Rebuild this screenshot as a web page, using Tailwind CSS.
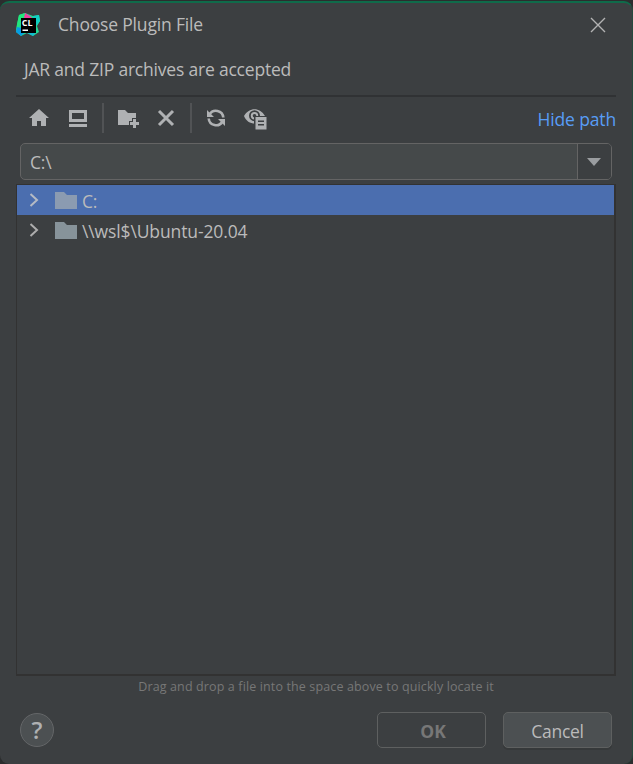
<!DOCTYPE html>
<html lang="en">
<head>
<meta charset="utf-8">
<title>Choose Plugin File</title>
<script src="https://cdn.jsdelivr.net/npm/@tailwindcss/browser@4"></script>
</head>
<body class="h-[764px] w-[633px] overflow-hidden bg-[#2b2d2e] pt-px font-['Open_Sans','Noto_Sans',sans-serif] text-[17.5px] text-[#bbbbbb]">
<div class="flex h-[763px] w-[633px] flex-col overflow-hidden rounded-[9px] border-t-2 border-r border-t-[#0f6b4a] border-r-[#25493d] bg-[#3c3f41]">
  <header class="flex h-[43px] shrink-0 items-center pl-4">
    <svg class="size-6 shrink-0" viewBox="0 0 24 24">
      <path d="M3 2 9 0 17 3 23 2 24 8 21 13 23 19 17 23 11 20 5 23 0 19 1 12Z" fill="#20d994"/>
      <path d="M3 2 9 0 8 6 3 13 0 18 1 11Z" fill="#21e77b"/>
      <path d="M9 0 14 3 16 5 8 5Z" fill="#ef3c9e"/>
      <path d="M17 3 23 2 24 8 20 13 17 9Z" fill="#10cfc3"/>
      <path d="M1 14 5 15 8 20 5 23 0 19Z" fill="#079ce3"/>
      <path d="M8 19 20 19 17 23 11 20Z" fill="#12bdd0"/>
      <path d="M5 5H20V20H5Z" fill="#000"/>
      <text x="5.8" y="12.6" font-family="Open Sans" font-size="9" font-weight="700" fill="#fff">CL</text>
      <path d="M6.5 16.5H12V18H6.5Z" fill="#fff"/>
    </svg>
    <h1 class="ml-[18px] whitespace-nowrap tracking-[-0.18px]">Choose Plugin File</h1>
    <svg class="mr-[26px] ml-auto size-4 shrink-0" viewBox="0 0 16 16" fill="none" stroke="#b3b3b3" stroke-width="1.4"><path d="M1 1 15 15M15 1 1 15"/></svg>
  </header>
  <p class="h-[49px] shrink-0 pt-[10px] pl-6 leading-[26px] tracking-[-0.2px]">JAR and ZIP archives are accepted</p>
  <div class="mx-4 h-[2px] shrink-0 bg-[#303234]"></div>
  <div class="flex h-[46px] shrink-0 items-center pr-[16px] pb-[4px] pl-7">
    <svg class="size-[22px] shrink-0" viewBox="0 0 22 22" fill="#afb1b3"><path d="M11 2 21 11H18V19H13V14H9V19H4V11H1Z"/></svg>
    <svg class="ml-[18px] size-[22px] shrink-0" viewBox="0 0 22 22" fill="#afb1b3"><path fill-rule="evenodd" d="M1 3H19V15H1ZM4 6V12H16V6Z"/><path d="M1 17H19V20H1Z"/></svg>
    <i class="ml-[12px] h-[30px] w-[2px] shrink-0 bg-[#515355]"></i>
    <svg class="ml-[13px] size-[24px] shrink-0" viewBox="0 0 24 24" fill="#afb1b3"><path d="M1 4H8L11 7H19V12H15V15H12V19H1Z"/><path d="M16 13H19V16H22V19H19V22H16V19H13V16H16Z"/></svg>
    <svg class="ml-[15px] size-[22px] shrink-0" viewBox="0 0 22 22" fill="none" stroke="#afb1b3" stroke-width="3"><path d="M3 4 17 18M17 4 3 18"/></svg>
    <i class="ml-[12px] h-[30px] w-[2px] shrink-0 bg-[#515355]"></i>
    <svg class="ml-[13px] size-[22px] shrink-0" viewBox="0 0 22 22"><g fill="none" stroke="#afb1b3" stroke-width="2.6"><path d="M4.5 7.5A7.4 7.4 0 0 1 18.3 10.5"/><path d="M17.5 14.5A7.4 7.4 0 0 1 3.7 11.5"/></g><path d="M2 3V10H9ZM20 19V12H13Z" fill="#afb1b3"/></svg>
    <svg class="ml-[16px] size-[24px] shrink-0" viewBox="0 0 24 24"><path d="M1 10C6 1 17 1 22 10L20 12H12V17.5C7 17.5 3 15 1 10Z" fill="#afb1b3"/><circle cx="11.5" cy="9.7" r="4.6" fill="none" stroke="#3c3f41" stroke-width="1.8"/><circle cx="11.5" cy="9.7" r="1.8" fill="#3c3f41"/><path d="M11 10H24V24H11Z" fill="#3c3f41"/><path d="M12.5 11H23.5V23.5H12.5Z" fill="#afb1b3"/><path d="M15 15.2H21M15 18.7H21" stroke="#3c3f41" stroke-width="1.4"/></svg>
    <a class="ml-auto pt-[2px] whitespace-nowrap tracking-[-0.15px] text-[#589df6]">Hide path</a>
  </div>
  <div class="mr-[20px] ml-5 flex h-[37px] shrink-0 overflow-hidden rounded-[5px] border-[1.5px] border-[#646464] bg-[#45494a]">
    <div class="flex-1 pt-[5px] pl-[9px] leading-[26px] tracking-[-0.15px]">C:\</div>
    <div class="flex w-[34px] items-center justify-center border-l border-[#646464] bg-[#3c3f41] pr-px"><svg class="h-2 w-[14px]" viewBox="0 0 14 8"><path d="M0 0H14L7 8Z" fill="#9a9da0"/></svg></div>
  </div>
  <div class="mr-4 ml-4 mt-[4px] h-[492px] shrink-0 border border-r-2 border-b-2 border-[#323232]">
    <div class="flex h-[30px] items-center bg-[#4b6eaf]">
      <svg class="ml-[12px] h-[14px] w-[10px]" viewBox="0 0 10 14" fill="none" stroke="#b4bac4" stroke-width="2"><path d="M1.5 1 8 7 1.5 13"/></svg>
      <svg class="ml-[16px] h-[18px] w-[22px]" viewBox="0 0 22 18"><path d="M0 1H9L12 4H22V18H0Z" fill="#8b9bb1"/></svg>
      <span class="ml-[5px] pt-[2px] tracking-[-0.35px]">C:</span>
    </div>
    <div class="flex h-[30px] items-center">
      <svg class="ml-[12px] h-[14px] w-[10px]" viewBox="0 0 10 14" fill="none" stroke="#adadad" stroke-width="2"><path d="M1.5 1 8 7 1.5 13"/></svg>
      <svg class="ml-[16px] h-[18px] w-[22px]" viewBox="0 0 22 18"><path d="M0 1H9L12 4H22V18H0Z" fill="#87939a"/></svg>
      <span class="ml-[5px] pt-[2px] whitespace-nowrap tracking-[-0.12px]">\\wsl$\Ubuntu-20.04</span>
    </div>
  </div>
  <p class="h-[36px] shrink-0 pt-px text-center text-[12.5px] leading-[20px] tracking-[0.13px] text-[#777777]">Drag and drop a file into the space above to quickly locate it</p>
  <footer class="flex h-[36px] shrink-0 items-center pr-[20px] pl-5">
    <button class="flex size-[34px] items-center justify-center rounded-full border border-[#646668] bg-[#4c5052] text-[24px] leading-none font-semibold text-[#afb1b3]">?</button>
    <button class="ml-auto h-[36px] w-[109px] rounded-[5px] border-[1.5px] border-[#5e6060] pt-[2px] pl-[3px] font-bold text-[#777777]">OK</button>
    <button class="ml-[17px] h-[36px] w-[109px] rounded-[5px] border-[1.5px] border-[#5e6060] bg-[#4c5052] pt-[2px] tracking-[-0.3px] shadow-[0_2px_0_#36393a]">Cancel</button>
  </footer>
</div>
</body>
</html>
